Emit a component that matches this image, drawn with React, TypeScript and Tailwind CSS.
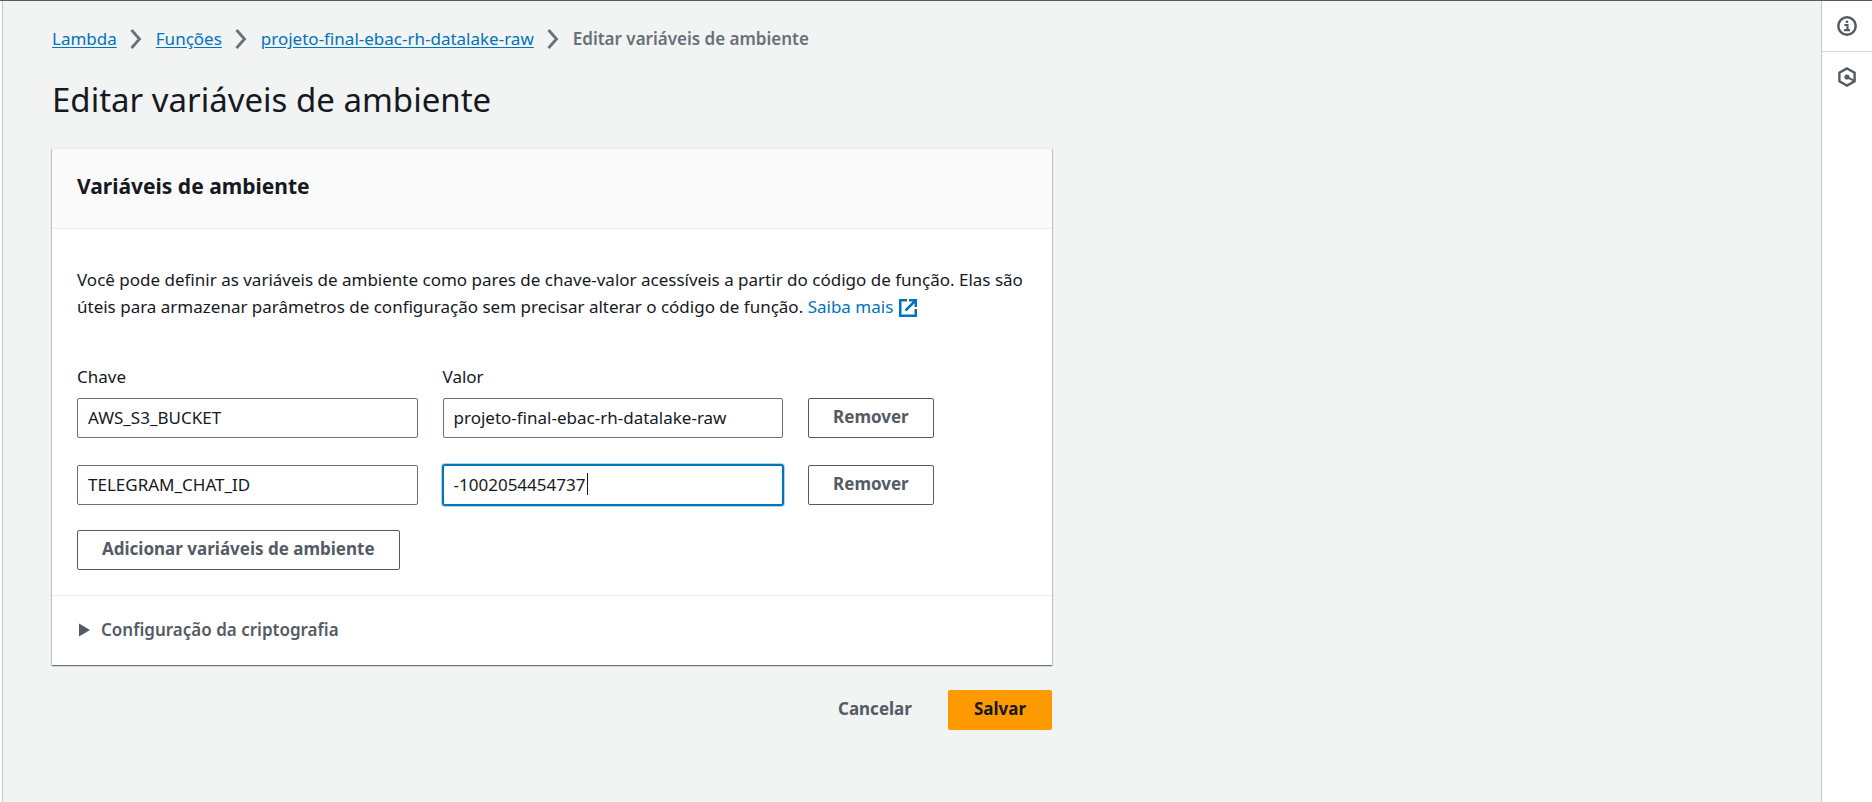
import { useState } from "react";

type Variable = { id: number; key: string; value: string };

const initialVariables: Variable[] = [
  { id: 1, key: "AWS_S3_BUCKET", value: "projeto-final-ebac-rh-datalake-raw" },
  { id: 2, key: "TELEGRAM_CHAT_ID", value: "-1002054454737" },
];

const breadcrumbs = ["Lambda", "Funções", "projeto-final-ebac-rh-datalake-raw"];

const rowGrid = "grid grid-cols-[minmax(0,14fr)_minmax(0,14fr)_minmax(0,9fr)] gap-x-[25px]";
const inputBase = "h-10 w-full rounded-[2px] bg-white px-[10px] pb-[2px] text-[17px] outline-none";
const buttonBase = "flex h-10 cursor-pointer items-center rounded-[2px] pb-1 font-bold";

function Chevron() {
  return (
    <svg className="ml-[13px] mr-[14px] h-5 w-3 shrink-0" viewBox="0 0 12 20" fill="none" stroke="#687078" strokeWidth="2.8" aria-hidden="true">
      <path d="M1.5 1l8 9-8 9" />
    </svg>
  );
}

function ExternalIcon() {
  return (
    <svg className="ml-[6px] inline-block h-[18px] w-[18px] align-[-4px]" viewBox="0 0 18 18" fill="none" stroke="#0073bb" strokeWidth="2.5" aria-hidden="true">
      <path d="M8 1.25H1.25v15.5h15.5V10" />
      <path d="M10 1.25h6.75V8M16.4 1.6L6.5 11.5" />
    </svg>
  );
}

function InfoIcon() {
  return (
    <svg className="h-5 w-5" viewBox="0 0 20 20" fill="none" stroke="#545b64" aria-hidden="true">
      <circle cx="10" cy="10" r="8.7" strokeWidth="2.5" />
      <path d="M7.4 9h3.1v5M7 14.1h6" strokeWidth="2.1" />
      <path d="M8.8 5.8h2.4" strokeWidth="2.3" />
    </svg>
  );
}

function HexagonIcon() {
  return (
    <svg className="h-5 w-5" viewBox="0 0 20 20" fill="none" stroke="#545b64" aria-hidden="true">
      <path d="M10 1.5l7.6 4.3v8.4L10 18.5l-7.6-4.3V5.8z" strokeWidth="2.4" />
      <circle cx="10" cy="10" r="2.6" fill="#545b64" stroke="none" />
      <path d="M10.5 10.3l7 3.6" strokeWidth="2" />
    </svg>
  );
}

export default function App() {
  const [variables, setVariables] = useState(initialVariables);
  const [activeId, setActiveId] = useState<number | null>(2);

  const update = (id: number, patch: Partial<Variable>) =>
    setVariables((list) => list.map((v) => (v.id === id ? { ...v, ...patch } : v)));

  return (
    <div className="flex min-h-screen border-t border-[#545b64] bg-white pl-[2px] font-['Noto_Sans',sans-serif] text-[17px] leading-[27px] text-[#16191f]">
      <main className="min-w-0 flex-1 border-l border-[#c4caca] bg-[#f2f3f3] px-[49px] pt-6 pb-12">
        <nav aria-label="Navegação" className="flex flex-wrap items-center">
          {breadcrumbs.map((label) => (
            <span key={label} className="flex items-center">
              <a href="#" className="text-[#0073bb] underline underline-offset-2">{label}</a>
              <Chevron />
            </span>
          ))}
          <span className="font-semibold text-[#687078]">Editar variáveis de ambiente</span>
        </nav>

        <h1 className="mt-[25px] text-[33px] leading-[45px]">Editar variáveis de ambiente</h1>

        <form className="mt-[26px] max-w-[1000px]" onSubmit={(e) => e.preventDefault()}>
          <section className="bg-white shadow-[0_1px_1px_0_rgba(0,28,36,0.4),1px_1px_1px_0_rgba(0,28,36,0.15),-1px_1px_1px_0_rgba(0,28,36,0.15)]">
            <header className="border-t border-b border-[#eaeded] bg-[#fafafa] px-[25px] pt-6 pb-7">
              <h2 className="text-[21px] font-bold leading-[27px]">Variáveis de ambiente</h2>
            </header>

            <div className="px-[25px] pt-[37px] pb-[25px]">
              <p>
                Você pode definir as variáveis de ambiente como pares de chave-valor acessíveis a partir do código de função. Elas são
                úteis para armazenar parâmetros de configuração sem precisar alterar o código de função.{" "}
                <a href="#" className="whitespace-nowrap text-[#0073bb]">
                  Saiba mais
                  <ExternalIcon />
                </a>
              </p>

              <div className={`${rowGrid} mt-[43px] mb-2`}>
                <label htmlFor="key-1">Chave</label>
                <label htmlFor="value-1">Valor</label>
              </div>

              <div className="flex flex-col gap-[27px]">
                {variables.map((v) => (
                  <div key={v.id} className={rowGrid}>
                    <input
                      id={`key-${v.id}`}
                      aria-label="Chave"
                      className={`${inputBase} border border-[#687078]`}
                      value={v.key}
                      onChange={(e) => update(v.id, { key: e.target.value })}
                    />
                    <div className="relative">
                      <input
                        id={`value-${v.id}`}
                        aria-label="Valor"
                        className={`${inputBase} ${
                          activeId === v.id
                            ? "border border-[#0073bb] shadow-[0_0_0_1px_#0073bb,0_0_0_2px_#b5d6ea]"
                            : "border border-[#687078]"
                        }`}
                        value={v.value}
                        onFocus={() => setActiveId(null)}
                        onChange={(e) => update(v.id, { value: e.target.value })}
                      />
                      {activeId === v.id && (
                        <span className="pointer-events-none absolute top-2 left-36 h-[22px] w-px bg-[#16191f]" />
                      )}
                    </div>
                    <div className="flex">
                      <button
                        type="button"
                        className={`${buttonBase} border border-[#545b64] bg-white px-6 text-[#545b64]`}
                        onClick={() => setVariables((list) => list.filter((item) => item.id !== v.id))}
                      >
                        Remover
                      </button>
                    </div>
                  </div>
                ))}
              </div>

              <button
                type="button"
                className={`${buttonBase} mt-[25px] border border-[#545b64] bg-white px-6 text-[#545b64]`}
                onClick={() => setVariables((list) => [...list, { id: Date.now(), key: "", value: "" }])}
              >
                Adicionar variáveis de ambiente
              </button>
            </div>

            <div className="border-t border-[#eaeded] px-[25px] pt-5 pb-[22px]">
              <button type="button" aria-expanded="false" className="flex cursor-pointer items-center font-semibold text-[#545b64]">
                <svg className="mr-[11px] ml-[2px] h-[14px] w-[11px]" viewBox="0 0 11 14" fill="#545b64" aria-hidden="true">
                  <path d="M0 .5l11 6.5L0 13.5z" />
                </svg>
                Configuração da criptografia
              </button>
            </div>
          </section>

          <footer className="mt-[25px] flex justify-end gap-[10px]">
            <button type="button" className={`${buttonBase} px-[26px] text-[#545b64]`}>Cancelar</button>
            <button type="submit" className={`${buttonBase} bg-[#ff9900] px-[26px] text-[#16191f]`}>Salvar</button>
          </footer>
        </form>
      </main>

      <aside className="w-[51px] shrink-0 border-l border-[#c4caca] bg-white">
        <button type="button" aria-label="Informações" className="flex h-[51px] w-full cursor-pointer items-center justify-center border-b border-[#d5dbdb]">
          <InfoIcon />
        </button>
        <button type="button" aria-label="Tutoriais" className="flex h-[50px] w-full cursor-pointer items-center justify-center">
          <HexagonIcon />
        </button>
      </aside>
    </div>
  );
}
